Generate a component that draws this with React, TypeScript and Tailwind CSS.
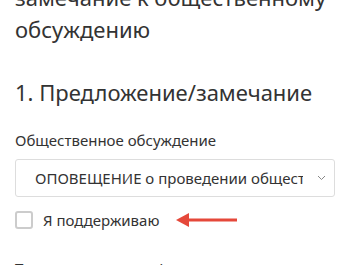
import React from "react";

const font = { fontFamily: '"Noto Sans", "Open Sans", sans-serif' };

const Chevron = () => (
	<svg width="9" height="6" viewBox="0 0 9 6" fill="none" className="shrink-0">
		<path d="M1 1l3.5 3.5L8 1" stroke="#888" strokeWidth="1" />
	</svg>
);

const Arrow = () => (
	<svg width="62" height="14" viewBox="0 0 62 14" fill="none">
		<path d="M12 5.5h49v3H12z" fill="#e5483a" />
		<path d="M0 7l13-7v14z" fill="#e5483a" />
	</svg>
);

export default function App() {
	return (
		<div className="w-[350px] h-[265px] overflow-hidden bg-white text-[#333]" style={font}>
			<div className="px-[15px]">
				<h1 className="text-[22px] leading-[32px] mt-[-19px] font-normal">
					замечание к общественному обсуждению
				</h1>

				<h2 className="mt-[32px] text-[22px] leading-[30px] font-normal">1. Предложение/замечание</h2>

				<div className="mt-[23px] text-[15px] leading-[20px]">Общественное обсуждение</div>

				<div className="mt-[9px] h-[38px] border border-[#ddd] rounded-[3px] flex items-center pl-[19px] pr-[8px] gap-[14px]">
					<div className="flex-1 overflow-hidden whitespace-nowrap text-[15px]">
						ОПОВЕЩЕНИЕ о проведении общественных обсуждений
					</div>
					<Chevron />
				</div>

				<div className="mt-[12px] flex items-center">
					<div className="w-[18px] h-[18px] border-2 border-[#ccc] rounded-[3px]" />
					<span className="ml-[10px] text-[15px]">Я поддерживаю</span>
					<span className="ml-[17px] flex">
						<Arrow />
					</span>
				</div>

				<div className="mt-[26px] text-[15px] leading-[20px]">Текст предложения/замечания</div>
			</div>
		</div>
	);
}
